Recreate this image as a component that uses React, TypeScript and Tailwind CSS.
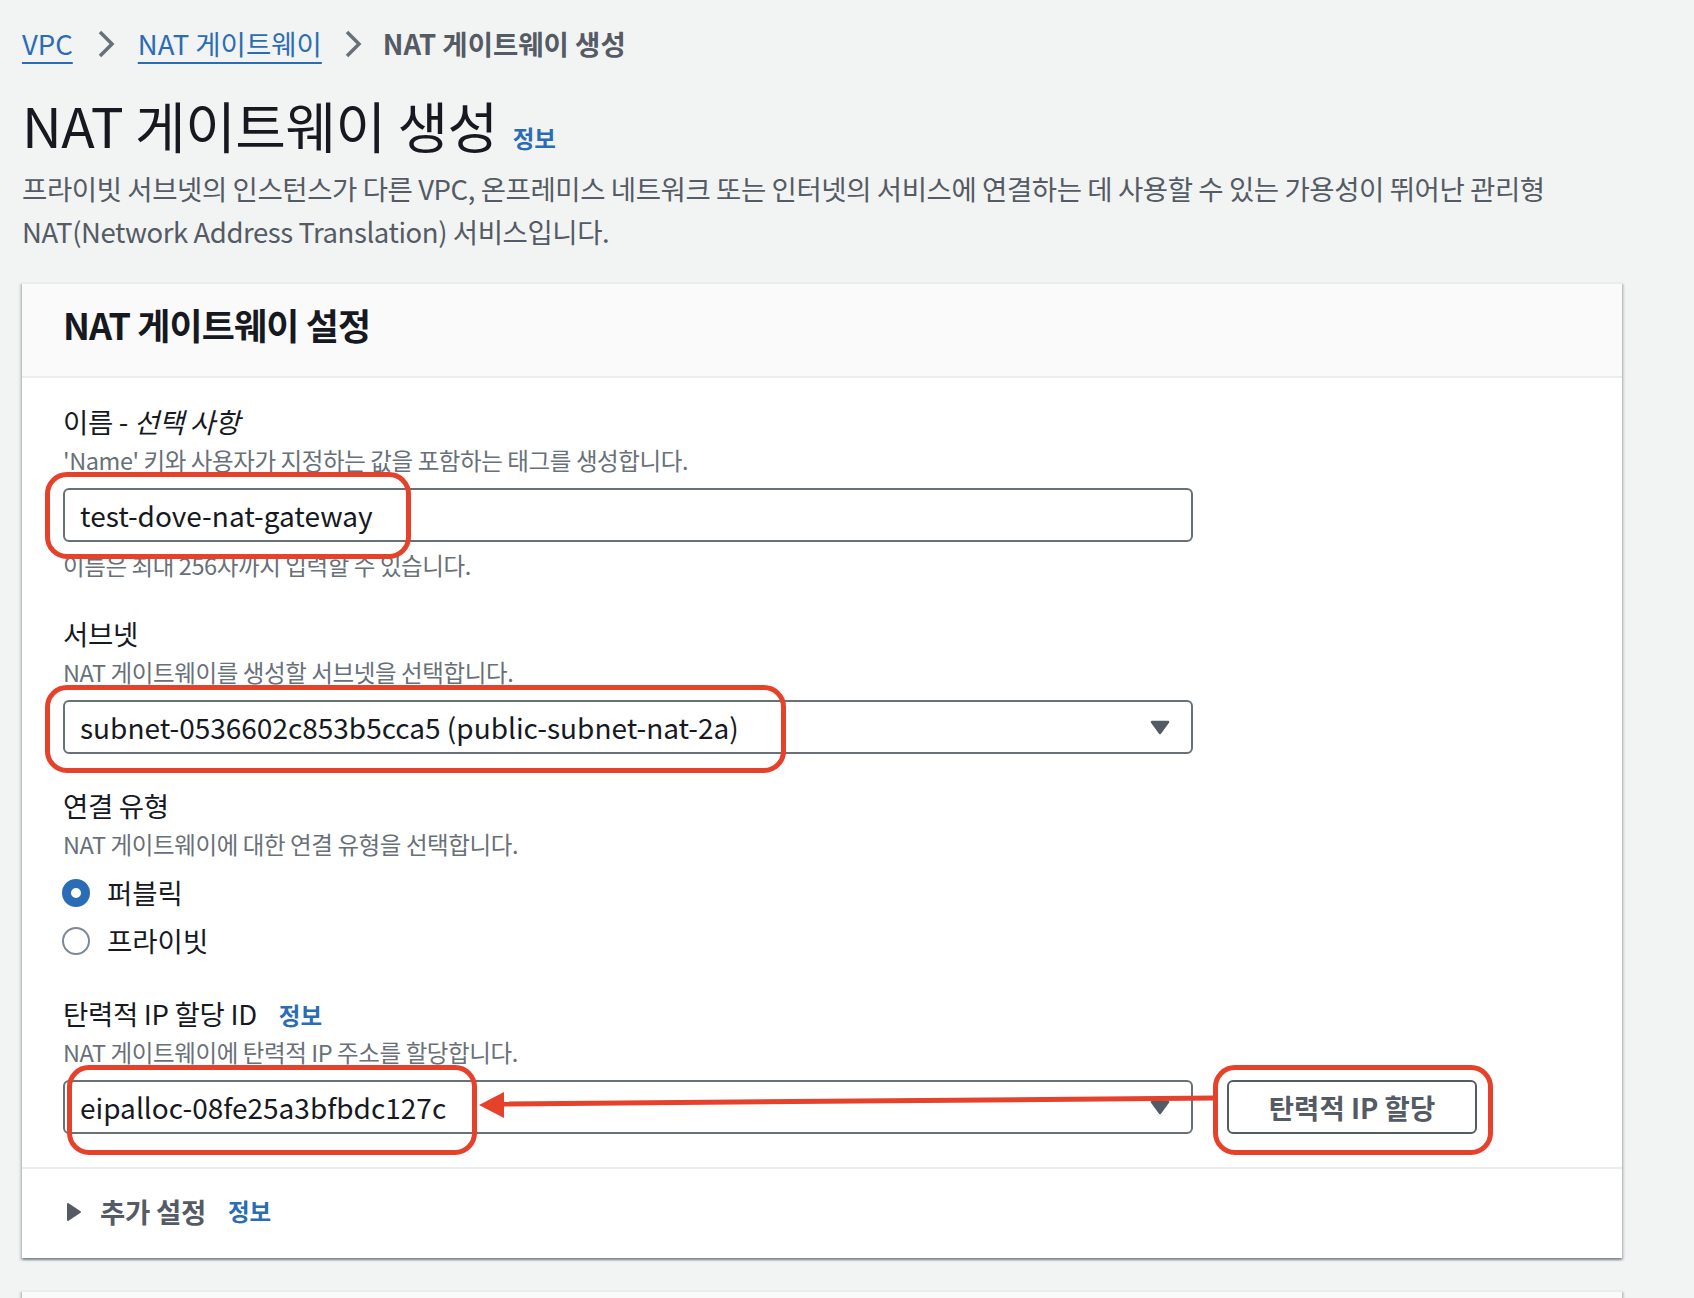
import React from "react";

function Chevron() {
  return (
    <svg width="18" height="28" viewBox="0 0 18 28" className="shrink-0">
      <polyline points="3,2 15,14 3,26" fill="none" stroke="#687078" strokeWidth="3.5" />
    </svg>
  );
}

function Caret() {
  return (
    <svg width="20" height="15" viewBox="0 0 20 15" className="shrink-0">
      <path d="M2 2 H18 L10 13 Z" fill="#545b64" stroke="#545b64" strokeWidth="2.5" strokeLinejoin="round" />
    </svg>
  );
}

function Info({ className = "" }: { className?: string }) {
  return <span className={`text-[23.5px] font-bold text-[#2a6db5] ${className}`}>정보</span>;
}

function Label({ children }: { children: React.ReactNode }) {
  return <div className="text-[27.5px] leading-[43px] tracking-[-0.3px] text-[#16191f]">{children}</div>;
}

function Desc({ children }: { children: React.ReactNode }) {
  return <div className="text-[23.5px] leading-[34px] tracking-[-0.4px] text-[#687078]">{children}</div>;
}

function Radio({ checked, label }: { checked: boolean; label: string }) {
  return (
    <div className="flex items-center h-[43px]">
      <span
        className={`ml-[-1px] w-[28px] h-[28px] rounded-full bg-white shrink-0 ${
          checked ? "border-[9px] border-[#2a6db5]" : "border-2 border-[#7d8998]"
        }`}
      />
      <span className="ml-[17px] text-[27.5px] leading-[43px] text-[#16191f]">{label}</span>
    </div>
  );
}

const cardShadow =
  "shadow-[0_2px_2px_0_rgba(0,28,36,0.3),2px_2px_2px_0_rgba(0,28,36,0.15),-2px_2px_2px_0_rgba(0,28,36,0.15)]";

export default function App() {
  return (
    <div className="relative h-[1298px] overflow-hidden bg-[#f2f3f3] pl-[22px] pt-[22px] font-['Noto_Sans_CJK_KR','Noto_Sans',sans-serif] text-[#16191f]">
      {/* breadcrumbs */}
      <nav className="flex items-center text-[27.5px] leading-[43px]">
        <a className="text-[#2a6db5] underline decoration-2 underline-offset-[7px]">VPC</a>
        <span className="ml-[24px]">
          <Chevron />
        </span>
        <a className="ml-[23px] text-[#2a6db5] underline decoration-2 underline-offset-[7px]">NAT 게이트웨이</a>
        <span className="ml-[22px]">
          <Chevron />
        </span>
        <span className="ml-[21px] font-bold text-[#545b64]">NAT 게이트웨이 생성</span>
      </nav>

      <div className="mt-[25px] flex items-baseline">
        <h1 className="text-[55px] leading-[68px] tracking-[-0.5px] font-normal text-[#16191f]">NAT 게이트웨이 생성</h1>
        <Info className="ml-[15px]" />
      </div>
      <p className="mt-[9px] text-[27.5px] leading-[43px] tracking-[-0.42px] text-[#545b64]">
        프라이빗 서브넷의 인스턴스가 다른 VPC, 온프레미스 네트워크 또는 인터넷의 서비스에 연결하는 데 사용할 수 있는 가용성이 뛰어난 관리형
        <br />
        NAT(Network Address Translation) 서비스입니다.
      </p>

      {/* settings card */}
      <section className={`mt-[29px] w-[1600px] bg-white border-t-2 border-[#eaeded] ${cardShadow}`}>
        <header className="bg-[#fafafa] border-b-2 border-[#eaeded] pl-[41px] pt-[15px] pb-[27px]">
          <h2 className="text-[36px] leading-[50px] tracking-[-0.9px] font-bold text-[#16191f]">NAT 게이트웨이 설정</h2>
        </header>

        <div className="pl-[41px] pt-[22px] pb-[33px]">
          {/* name */}
          <div>
            <Label>
              이름 - <i>선택 사항</i>
            </Label>
            <Desc>'Name' 키와 사용자가 지정하는 값을 포함하는 태그를 생성합니다.</Desc>
            <div className="mt-[11px] w-[1130px] h-[54px] border-2 border-[#687078] rounded-[6px] bg-white pl-[15px] flex items-center text-[28px] leading-[43px]">
              test-dove-nat-gateway
            </div>
            <div className="mt-[6px]">
              <Desc>이름은 최대 256자까지 입력할 수 있습니다.</Desc>
            </div>
          </div>

          {/* subnet */}
          <div className="mt-[30px]">
            <Label>서브넷</Label>
            <Desc>NAT 게이트웨이를 생성할 서브넷을 선택합니다.</Desc>
            <div className="mt-[11px] w-[1130px] h-[54px] border-2 border-[#687078] rounded-[6px] bg-white pl-[15px] pr-[21px] flex items-center justify-between text-[28px] leading-[43px]">
              <span>subnet-0536602c853b5cca5 (public-subnet-nat-2a)</span>
              <Caret />
            </div>
          </div>

          {/* connectivity type */}
          <div className="mt-[30px]">
            <Label>연결 유형</Label>
            <Desc>NAT 게이트웨이에 대한 연결 유형을 선택합니다.</Desc>
            <div className="mt-[10px] flex flex-col gap-[5px]">
              <Radio checked label="퍼블릭" />
              <Radio checked={false} label="프라이빗" />
            </div>
          </div>

          {/* elastic ip */}
          <div className="mt-[30px]">
            <div className="flex items-baseline">
              <Label>탄력적 IP 할당 ID</Label>
              <Info className="ml-[22px]" />
            </div>
            <Desc>NAT 게이트웨이에 탄력적 IP 주소를 할당합니다.</Desc>
            <div className="mt-[11px] flex items-center">
              <div className="w-[1130px] h-[54px] border-2 border-[#687078] rounded-[6px] bg-white pl-[15px] pr-[21px] flex items-center justify-between text-[28px] leading-[43px]">
                <span>eipalloc-08fe25a3bfbdc127c</span>
                <Caret />
              </div>
              <button
                type="button"
                className="ml-[34px] w-[250px] h-[54px] border-2 border-[#545b64] rounded-[6px] bg-white text-[27.5px] leading-[43px] font-bold text-[#545b64]"
              >
                탄력적 IP 할당
              </button>
            </div>
          </div>
        </div>

        <div className="border-t-2 border-[#eaeded] pl-[44px] pt-[21px] pb-[25px] flex items-center">
          <svg width="16" height="20" viewBox="0 0 16 20" className="shrink-0">
            <path d="M2 2 L14 10 L2 18 Z" fill="#545b64" stroke="#545b64" strokeWidth="2" strokeLinejoin="round" />
          </svg>
          <span className="ml-[18px] text-[27.5px] leading-[43px] tracking-[-0.3px] font-bold text-[#545b64]">추가 설정</span>
          <Info className="ml-[22px]" />
        </div>
      </section>

      {/* next card, cut off */}
      <section className={`mt-[32px] w-[1600px] h-[60px] bg-[#fafafa] border-t-2 border-[#eaeded] ${cardShadow}`} />

      {/* red annotations */}
      <div className="absolute left-[45px] top-[472px] w-[366px] h-[87px] rounded-[22px] border-[5px] border-[#e5412b] pointer-events-none" />
      <div className="absolute left-[45px] top-[685px] w-[741px] h-[88px] rounded-[22px] border-[5px] border-[#e5412b] pointer-events-none" />
      <div className="absolute left-[67px] top-[1065px] w-[410px] h-[90px] rounded-[22px] border-[5px] border-[#e5412b] pointer-events-none" />
      <div className="absolute left-[1213px] top-[1065px] w-[280px] h-[90px] rounded-[22px] border-[5px] border-[#e5412b] pointer-events-none" />
      <svg className="absolute left-0 top-0 pointer-events-none" width="1694" height="1298" viewBox="0 0 1694 1298">
        <line x1="1216" y1="1098" x2="498" y2="1104" stroke="#e5412b" strokeWidth="5" />
        <polygon points="479,1105 504,1092 504,1118" fill="#e5412b" />
      </svg>
    </div>
  );
}
